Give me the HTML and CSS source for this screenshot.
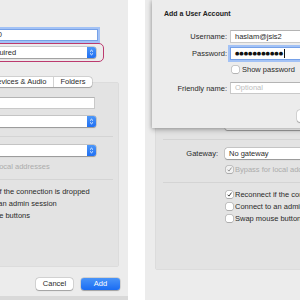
FILE: index.html
```html
<!DOCTYPE html>
<html>
<head>
    <meta charset="UTF-8">
    <link rel="stylesheet" href="styles.css">
</head>
<body>
    <div class="screens">
        <div class="shot shot-left">
            <div class="window">
                <div class="form-row top-row">
                    <div class="form-label">PC name:</div>
                    <div class="text-field top-field focused">192.168.1.100</div>
                </div>
                <div class="form-row top-row user-row">
                    <div class="form-label">User account:</div>
                    <div class="popup annotated">
                        <span class="popup-text">Ask when required</span>
                        <span class="popup-stepper">
                            <svg width="5" height="7" viewBox="0 0 5 7"><path d="M1 2.6 L2.5 1.2 L4 2.6 M1 4.4 L2.5 5.8 L4 4.4" fill="none" stroke="#fff" stroke-width="0.9"/></svg>
                        </span>
                    </div>
                </div>
                <div class="tabs">
                    <div class="tab-strip">
                        <div class="tab tab-selected">General</div>
                        <div class="tab">Display</div>
                        <div class="tab">Devices &amp; Audio</div>
                        <div class="tab">Folders</div>
                    </div>
                </div>
                <div class="group-box">
                    <div class="form-row">
                        <div class="form-label">Friendly name:</div>
                        <div class="text-field box-field"><span class="placeholder">Optional</span></div>
                    </div>
                    <div class="form-row group-row">
                        <div class="form-label">Group:</div>
                        <div class="popup">
                            <span class="popup-text">Saved PCs</span>
                            <span class="popup-stepper">
                                <svg width="5" height="7" viewBox="0 0 5 7"><path d="M1 2.6 L2.5 1.2 L4 2.6 M1 4.4 L2.5 5.8 L4 4.4" fill="none" stroke="#fff" stroke-width="0.9"/></svg>
                            </span>
                        </div>
                    </div>
                    <div class="separator"></div>
                    <div class="form-row gateway-row">
                        <div class="form-label">Gateway:</div>
                        <div class="popup">
                            <span class="popup-text">No gateway</span>
                            <span class="popup-stepper">
                                <svg width="5" height="7" viewBox="0 0 5 7"><path d="M1 2.6 L2.5 1.2 L4 2.6 M1 4.4 L2.5 5.8 L4 4.4" fill="none" stroke="#fff" stroke-width="0.9"/></svg>
                            </span>
                        </div>
                    </div>
                    <div class="check-row bypass-row disabled">
                        <span class="check-box"><svg width="7" height="7" viewBox="0 0 7 7"><path d="M1.6 3.7 L3 5.1 L5.5 1.6" fill="none" stroke="#888" stroke-width="0.9"/></svg></span>
                        <span>Bypass for local addresses</span>
                    </div>
                    <div class="separator"></div>
                    <div class="check-row first-check">
                        <span class="check-box"><svg width="7" height="7" viewBox="0 0 7 7"><path d="M1.6 3.7 L3 5.1 L5.5 1.6" fill="none" stroke="#2a2a2a" stroke-width="0.9"/></svg></span>
                        <span>Reconnect if the connection is dropped</span>
                    </div>
                    <div class="check-row">
                        <span class="check-box"></span>
                        <span>Connect to an admin session</span>
                    </div>
                    <div class="check-row">
                        <span class="check-box"></span>
                        <span>Swap mouse buttons</span>
                    </div>
                </div>
                <div class="button-row">
                    <div class="btn">Cancel</div>
                    <div class="btn btn-primary">Add</div>
                </div>
            </div>
        </div>

        <div class="shot shot-right">
            <div class="window">
                <div class="form-row top-row covered">
                    <div class="form-label">PC name:</div>
                    <div class="text-field top-field">192.168.1.100</div>
                </div>
                <div class="form-row top-row user-row covered">
                    <div class="form-label">User account:</div>
                    <div class="popup">
                        <span class="popup-text">Ask when required</span>
                        <span class="popup-stepper"></span>
                    </div>
                </div>
                <div class="tabs covered">
                    <div class="tab-strip">
                        <div class="tab tab-selected">General</div>
                        <div class="tab">Display</div>
                        <div class="tab">Devices &amp; Audio</div>
                        <div class="tab">Folders</div>
                    </div>
                </div>
                <div class="group-box">
                    <div class="form-row covered">
                        <div class="form-label">Friendly name:</div>
                        <div class="text-field box-field"><span class="placeholder">Optional</span></div>
                    </div>
                    <div class="form-row group-row">
                        <div class="form-label covered">Group:</div>
                        <div class="popup">
                            <span class="popup-text covered">Saved PCs</span>
                            <span class="popup-stepper"></span>
                        </div>
                    </div>
                    <div class="separator"></div>
                    <div class="form-row gateway-row">
                        <div class="form-label">Gateway:</div>
                        <div class="popup">
                            <span class="popup-text">No gateway</span>
                            <span class="popup-stepper"></span>
                        </div>
                    </div>
                    <div class="check-row bypass-row disabled">
                        <span class="check-box"><svg width="7" height="7" viewBox="0 0 7 7"><path d="M1.6 3.7 L3 5.1 L5.5 1.6" fill="none" stroke="#888" stroke-width="0.9"/></svg></span>
                        <span>Bypass for local addresses</span>
                    </div>
                    <div class="separator"></div>
                    <div class="check-row first-check">
                        <span class="check-box"><svg width="7" height="7" viewBox="0 0 7 7"><path d="M1.6 3.7 L3 5.1 L5.5 1.6" fill="none" stroke="#2a2a2a" stroke-width="0.9"/></svg></span>
                        <span>Reconnect if the connection is dropped</span>
                    </div>
                    <div class="check-row">
                        <span class="check-box"></span>
                        <span>Connect to an admin session</span>
                    </div>
                    <div class="check-row">
                        <span class="check-box"></span>
                        <span>Swap mouse buttons</span>
                    </div>
                </div>
            </div>

            <div class="sheet">
                <div class="sheet-title">Add a User Account</div>
                <div class="form-row sheet-row">
                    <div class="form-label">Username:</div>
                    <div class="text-field sheet-field">haslam@jsis2</div>
                </div>
                <div class="form-row sheet-row password-row">
                    <div class="form-label">Password:</div>
                    <div class="text-field sheet-field focused"><span class="dots">●●●●●●●●●●●</span><span class="caret"></span></div>
                </div>
                <div class="check-row show-row">
                    <span class="check-box"></span>
                    <span>Show password</span>
                </div>
                <div class="form-row sheet-row friendly-row">
                    <div class="form-label">Friendly name:</div>
                    <div class="text-field sheet-field"><span class="placeholder">Optional</span></div>
                </div>
                <div class="button-row sheet-buttons">
                    <div class="btn">Cancel</div>
                    <div class="btn btn-primary">Add</div>
                </div>
            </div>
        </div>
    </div>
</body>
</html>
```

FILE: styles.css
```css
body {
    margin: 0;
    background: #fff;
    font-family: "Liberation Sans", Arial, sans-serif;
    font-size: 7.5px;
    color: #2a2a2a;
    overflow: hidden;
}
.screens {
    display: flex;
    gap: 17px;
    height: 300px;
    overflow: hidden;
}
.shot {
    position: relative;
    flex-shrink: 0;
    height: 300px;
    overflow: hidden;
}
.shot-left {
    width: 128px;
    background: #d9d9d9;
}
.shot-right {
    width: 155px;
    background: #ececec;
}
.window {
    width: 258px;
    height: 296px;
    padding-top: 29px;
    box-sizing: border-box;
    background: #ececec;
}
.shot-left .window {
    margin-left: -130px;
}
.shot-right .window {
    margin-top: 3px;
    height: 297px;
}
/* parts of the dialog hidden under the sheet */
.covered {
    visibility: hidden;
}

.form-row {
    display: flex;
    align-items: center;
}
.form-label {
    flex: 0 0 63px;
    margin-right: 7px;
    text-align: right;
    white-space: nowrap;
}
.top-row {
    padding-left: 10px;
}
.user-row {
    margin-top: 6px;
}

.text-field {
    height: 12px;
    line-height: 10px;
    padding: 0 3px;
    box-sizing: border-box;
    background: #fff;
    border: 1px solid #c9c9c9;
    border-top-color: #b4b4b4;
    white-space: nowrap;
    overflow: hidden;
}
.text-field.focused {
    border-color: #76a1e8;
    box-shadow: 0 0 0 2px #a3c2f5;
}
.top-field {
    width: 148px;
}
.box-field {
    width: 145px;
}
.placeholder {
    color: #bdbdbd;
}

.popup {
    position: relative;
    display: flex;
    align-items: center;
    width: 146px;
    height: 11px;
    padding-left: 4px;
    box-sizing: border-box;
    background: #fff;
    border-radius: 2.5px;
    box-shadow: 0 0 0 0.5px rgba(0,0,0,0.22), 0 0.5px 1px rgba(0,0,0,0.25);
}
.popup-text {
    flex: 1;
    white-space: nowrap;
}
.popup-stepper {
    display: flex;
    align-items: center;
    justify-content: center;
    width: 9px;
    height: 11px;
    background: linear-gradient(#4d97f8, #1f6ff3);
    border-radius: 0 2.5px 2.5px 0;
}
.annotated::after {
    content: "";
    position: absolute;
    top: -4px;
    bottom: -4px;
    left: -80px;
    right: -8px;
    border: 1.5px solid #bc3a6e;
    border-radius: 5px;
}

.tabs {
    position: relative;
    z-index: 1;
    display: flex;
    justify-content: center;
    margin-top: 19px;
    margin-bottom: -5px;
}
.tab-strip {
    display: flex;
    background: #fff;
    border-radius: 3px;
    box-shadow: 0 0 0 0.5px rgba(0,0,0,0.2), 0 0.5px 1px rgba(0,0,0,0.22);
}
.tab {
    padding: 0 6.5px;
    line-height: 10px;
    white-space: nowrap;
}
.tab + .tab {
    border-left: 0.5px solid #d2d2d2;
}
.tab-selected {
    background: linear-gradient(#4d97f8, #1f6ff3);
    color: #fff;
    border-radius: 3px 0 0 3px;
}

.group-box {
    height: 185px;
    margin: 0 9px 0 10px;
    padding-top: 15px;
    box-sizing: border-box;
    background: #e3e3e3;
    border-radius: 3px;
    box-shadow: inset 0 0 0 0.5px rgba(0,0,0,0.06);
}
.group-row {
    margin-top: 7px;
}
.separator {
    height: 1px;
    margin: 9px 6px 0 8px;
    background: #d4d4d4;
}
.gateway-row {
    margin-top: 8px;
}

.check-row {
    display: flex;
    align-items: center;
    height: 8px;
    padding-left: 71px;
    white-space: nowrap;
}
.check-box {
    display: flex;
    flex: 0 0 7px;
    height: 7px;
    margin-right: 2px;
    background: #fff;
    border-radius: 1.5px;
    box-shadow: 0 0 0 0.5px rgba(0,0,0,0.3), 0 0.5px 0.5px rgba(0,0,0,0.2);
}
.disabled {
    color: #acacac;
}
.disabled .check-box {
    background: #f1f1f1;
}
.bypass-row {
    margin-top: 6px;
}
.first-check {
    margin-top: 7px;
}
.check-row + .check-row {
    margin-top: 4px;
}

.button-row {
    display: flex;
    justify-content: flex-end;
    gap: 8px;
    margin-top: 11px;
    padding-right: 8px;
}
.btn {
    width: 37px;
    height: 12px;
    line-height: 12px;
    text-align: center;
    background: #fff;
    border-radius: 3px;
    box-shadow: 0 0 0 0.5px rgba(0,0,0,0.18), 0 0.5px 1px rgba(0,0,0,0.25);
}
.btn-primary {
    width: 39px;
    color: #fff;
    background: linear-gradient(#4a94f8, #1a6cf3);
}

.sheet {
    position: absolute;
    z-index: 5;
    top: 0;
    left: 7px;
    width: 237px;
    padding: 10px 0 6px 12px;
    box-sizing: border-box;
    background: #ececec;
    box-shadow: 0 2px 5px rgba(0,0,0,0.28), -1px 0 3px rgba(0,0,0,0.12);
}
.sheet-title {
    font-size: 7px;
    font-weight: bold;
    line-height: 8px;
    color: #222;
}
.sheet .form-label {
    flex-basis: 63px;
    margin-right: 3px;
}
.sheet-row {
    margin-top: 12px;
}
.sheet-field {
    width: 151px;
    height: 13px;
    line-height: 11px;
    padding-left: 4px;
}
.password-row {
    margin-top: 4px;
}
.dots {
    font-family: "DejaVu Sans", sans-serif;
    font-size: 5px;
    color: #111;
    vertical-align: top;
}
.caret {
    display: inline-block;
    width: 1px;
    height: 9px;
    margin: 1px 0 0 1px;
    vertical-align: top;
    background: #111;
}
.show-row {
    margin-top: 5px;
    padding-left: 68px;
}
.show-row .check-box {
    margin-right: 3px;
}
.friendly-row {
    margin-top: 9px;
}
.friendly-row .sheet-field {
    height: 12px;
    line-height: 10px;
}
.sheet-buttons {
    margin-top: 16px;
}
```
